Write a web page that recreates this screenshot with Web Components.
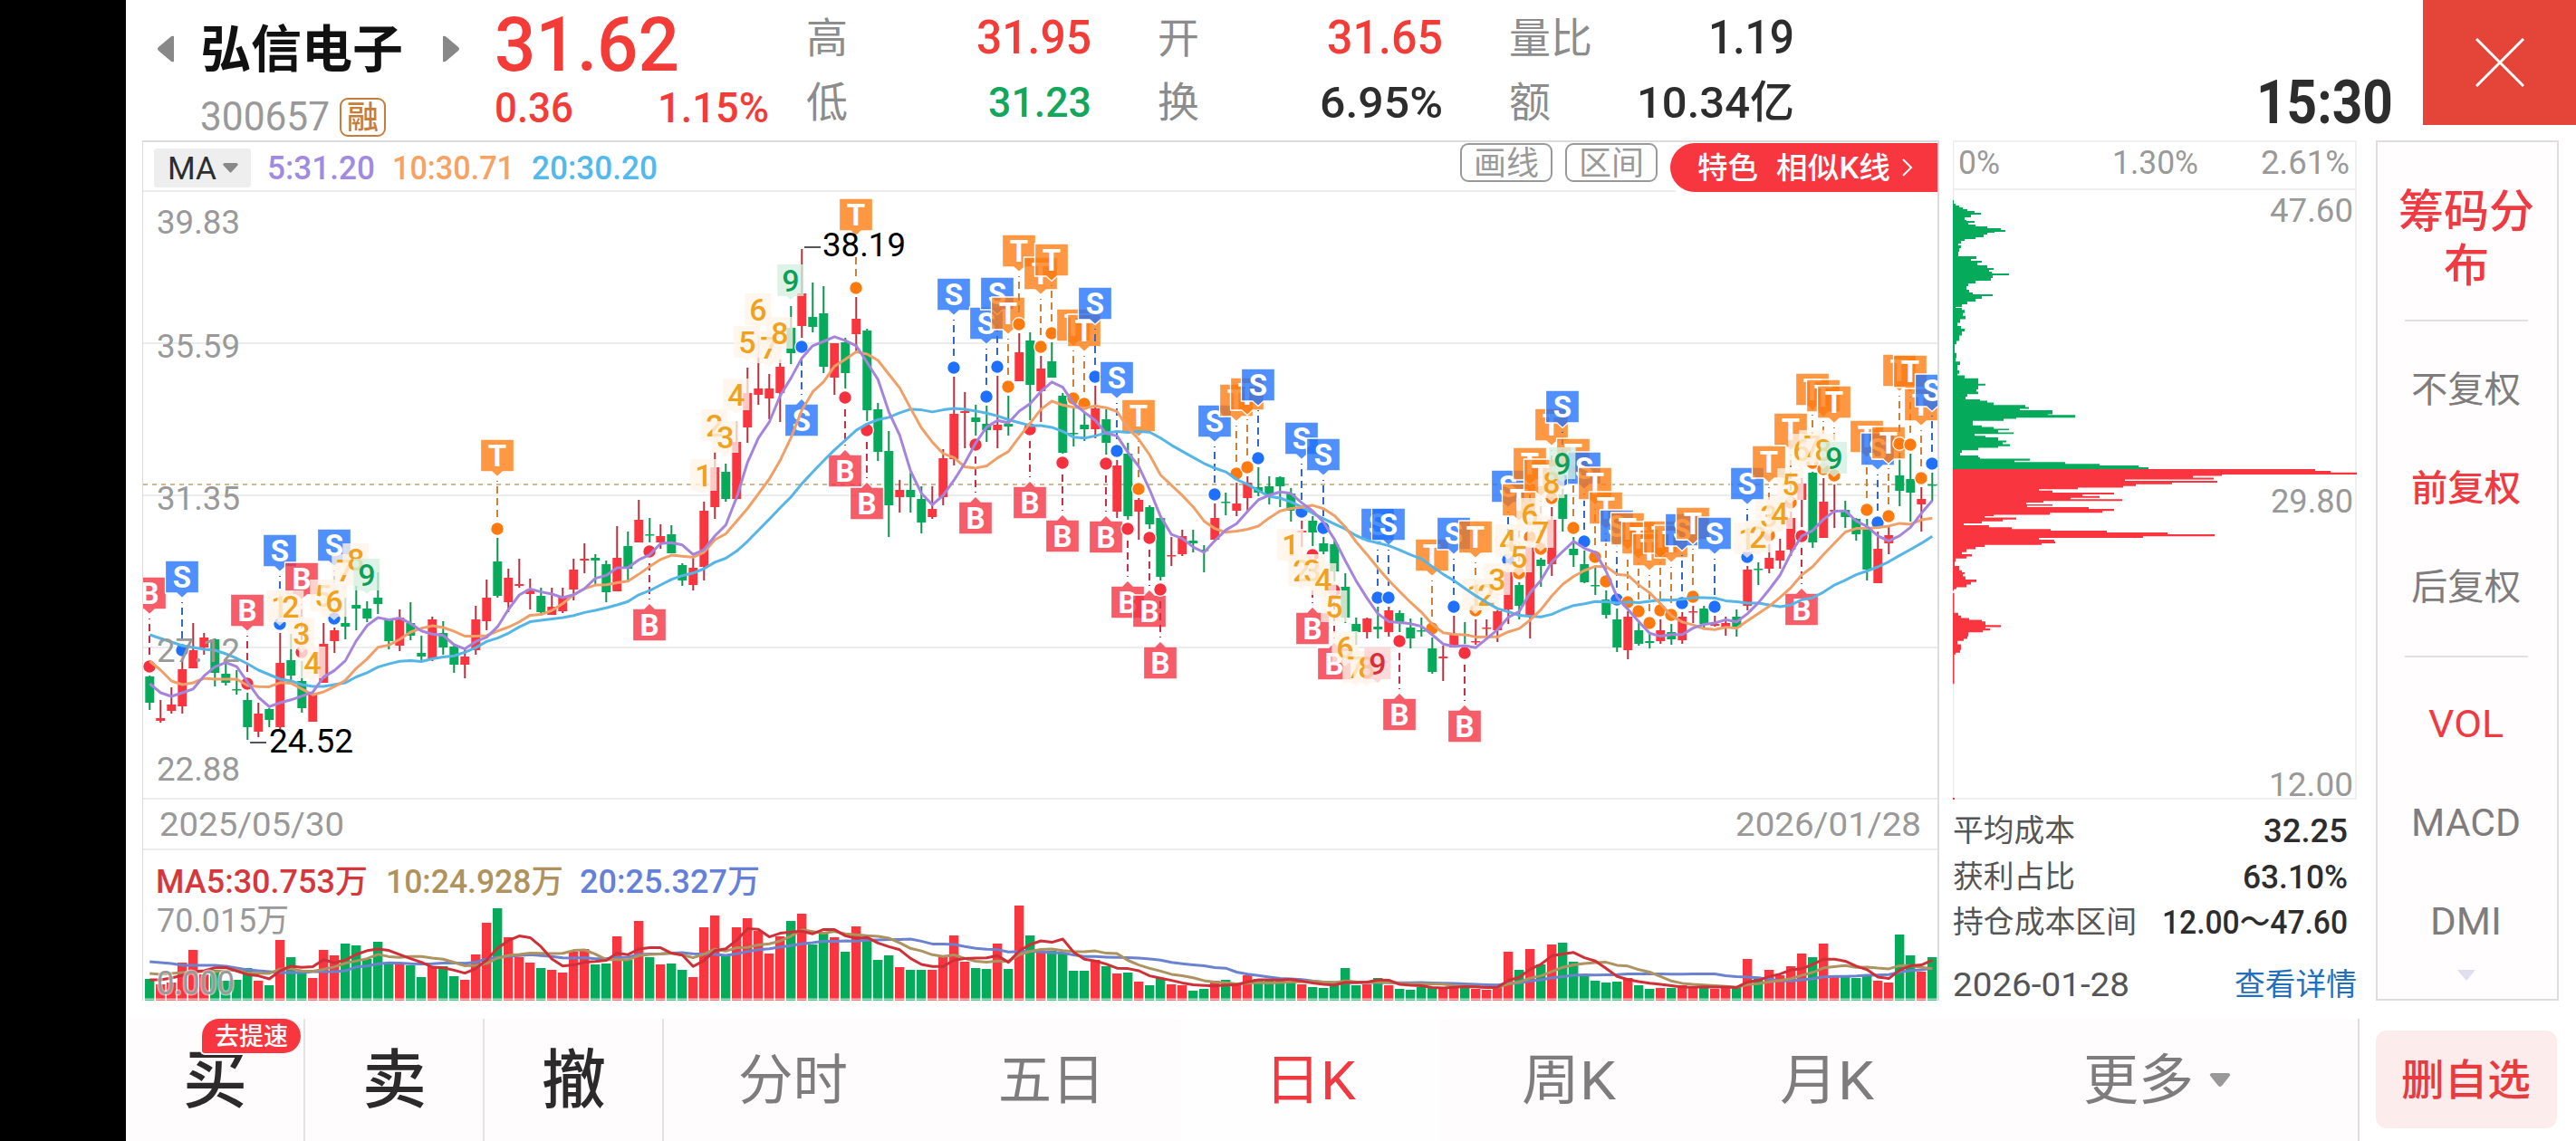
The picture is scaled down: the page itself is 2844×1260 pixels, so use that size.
<!DOCTYPE html>
<html lang="zh-CN">
<head>
<meta charset="utf-8">
<title>弘信电子 300657</title>
<style>
    html, body { margin: 0; padding: 0; }
    body {
        --red: #f8363f;
        --green: #05aa5b;
        --line: #e4e4e4;
        --grey: #8c8c8c;
        width: 2844px;
        height: 1260px;
        overflow: hidden;
        background: #fff;
        font-family: Roboto, "Noto Sans CJK SC", sans-serif;
        color: #2d2d2d;
    }
</style>
</head>
<body>
<stock-page>
    <stock-header slot="header"></stock-header>
    <kline-panel slot="main"></kline-panel>
    <chip-panel slot="main"></chip-panel>
    <side-menu slot="main"></side-menu>
    <bottom-bar slot="footer"></bottom-bar>
</stock-page>

<script>
// Text set to a fixed width, centred on its capitals
class FitText extends HTMLElement {
    constructor() {
        super();
        this.attachShadow({ mode: 'open' });
    }

    connectedCallback() {
        const w = Number(this.getAttribute('w'));
        const size = Number(this.getAttribute('size'));
        this.shadowRoot.innerHTML = `
            <style>
                :host { display: block; flex: none; width: ${w}px; height: ${size}px; }
                svg { display: block; overflow: visible; }
                text { fill: currentColor; white-space: pre; }
            </style>
            <svg width="${w}" height="${size}">
                <text x="0" y="${size * 0.85}" font-size="${size}" textLength="${w}" lengthAdjust="spacingAndGlyphs">${this.textContent}</text>
            </svg>
        `;
    }
}

class StockPage extends HTMLElement {
    constructor() {
        super();
        this.attachShadow({ mode: 'open' });
        this.shadowRoot.innerHTML = `
            <style>
                :host { display: grid; grid-template-columns: 139px 1fr; width: 2844px; height: 1260px; }
                .notch { background: #000; }
                .content { display: flex; flex-direction: column; }
                .main { display: flex; height: 950px; padding-left: 18px; }
                ::slotted(bottom-bar) { margin-top: 20px; }
            </style>
            <div class="notch"></div>
            <div class="content">
                <slot name="header"></slot>
                <div class="main"><slot name="main"></slot></div>
                <slot name="footer"></slot>
            </div>
        `;
    }
}

class StockHeader extends HTMLElement {
    constructor() {
        super();
        this.attachShadow({ mode: 'open' });
        this.shadowRoot.innerHTML = `
            <style>
                :host { display: flex; height: 155px; box-sizing: border-box; padding-left: 34px; }
                .name { width: 376px; padding-top: 20px; }
                .title, .code { display: flex; align-items: center; }
                .title { height: 68px; font-weight: 700; color: #111; }
                .title fit-text { margin: 0 43px 0 28px; }
                .code { height: 82px; padding-left: 48px; color: #999; }
                .tag {
                    display: flex; align-items: center; justify-content: center;
                    width: 47px; height: 39px; margin-left: 11px;
                    border: 2px solid #c87c3a; border-radius: 9px; color: #c87c3a; font-weight: 500;
                }
                .quote { width: 341px; padding-top: 7px; color: #f33b38; font-weight: 500; }
                .big { height: 84px; margin-left: -3px; }
                .change { display: flex; justify-content: space-between; width: 303px; margin-top: 5px; margin-left: -3px; }
                .stats { display: grid; grid-template-columns: repeat(3, 315px); column-gap: 73px; grid-auto-rows: 71px; padding-top: 6px; }
                .stats div { display: flex; align-items: center; justify-content: space-between; color: var(--grey); }
                .stats .up, .stats .down, .stats .num { font-weight: 500; }
                .up { color: #f33b38; }
                .down { color: #12a75d; }
                .num { color: #2d2d2d; }
                .clock { margin: 79px 33px 0 auto; font-weight: 700; }
                .close { display: flex; align-items: center; justify-content: center; width: 169px; height: 138px; background: #e54539; }
            </style>
            <div class="name">
                <div class="title">
                    <svg width="20" height="30"><path d="M19 1V29Q17 30 15 28L2 17Q0 15 2 13L15 2Q17 0 19 1Z" fill="#888"/></svg>
                    <fit-text w="224" size="56">弘信电子</fit-text>
                    <svg width="20" height="30"><path d="M1 1V29Q3 30 5 28L18 17Q20 15 18 13L5 2Q3 0 1 1Z" fill="#888"/></svg>
                </div>
                <div class="code">
                    <fit-text w="143" size="44">300657</fit-text>
                    <span class="tag"><fit-text w="35" size="35">融</fit-text></span>
                </div>
            </div>
            <div class="quote">
                <div class="big"><fit-text w="204" size="84">31.62</fit-text></div>
                <div class="change">
                    <fit-text w="87" size="46">0.36</fit-text>
                    <fit-text w="123" size="46">1.15%</fit-text>
                </div>
            </div>
            <div class="stats">
                <div><fit-text w="46" size="46">高</fit-text><fit-text class="up" w="127" size="51">31.95</fit-text></div>
                <div><fit-text w="46" size="46">开</fit-text><fit-text class="up" w="128" size="51">31.65</fit-text></div>
                <div><fit-text w="92" size="46">量比</fit-text><fit-text class="num" w="95" size="51">1.19</fit-text></div>
                <div><fit-text w="46" size="46">低</fit-text><fit-text class="down" w="114" size="47">31.23</fit-text></div>
                <div><fit-text w="46" size="46">换</fit-text><fit-text class="num" w="136" size="49">6.95%</fit-text></div>
                <div><fit-text w="46" size="46">额</fit-text><fit-text class="num" w="174" size="49">10.34亿</fit-text></div>
            </div>
            <fit-text class="clock" w="151" size="67">15:30</fit-text>
            <div class="close">
                <svg width="54" height="54"><path d="M1 1L53 53M53 1L1 53" stroke="#fff" stroke-width="3"/></svg>
            </div>
        `;
    }
}

// r/g, high, body top, body bottom, low
const CANDLES = `
g 746 747 776 784|r 773 793 796 798|r 759 778 785 788|r 728 739 780 788|r 688 718 738 738|r 699 704 715 723
g 705 706 743 758|g 732 744 754 757|g 740 761 762 767|g 765 773 803 817|r 776 788 808 814|g 782 783 795 803
r 699 732 803 805|g 700 729 746 752|g 730 752 782 787|r 765 767 797 797|r 688 711 754 754|r 693 696 708 721
g 660 688 692 706|g 647 668 672 696|g 664 672 683 687|g 632 660 667 678|g 683 684 708 717|r 673 682 713 719
g 665 688 702 707|g 702 721 725 731|r 681 684 727 730|g 686 699 715 723|g 712 714 734 743|r 717 725 734 749
r 669 684 718 723|r 640 660 686 696|g 594 620 658 660|r 628 638 665 676|r 617 645 647 649|r 639 651 656 673
g 649 658 676 679|r 649 670 679 679|r 649 658 675 677|r 617 629 651 663|r 600 617 619 633|g 612 616 619 645
g 619 623 654 665|r 581 616 653 653|g 587 603 628 643|r 552 574 599 599|g 572 590 591 599|r 579 592 599 606
g 580 590 611 611|g 622 624 641 647|r 615 627 646 652|r 554 564 626 641|r 499 516 560 573|g 512 521 551 554
r 465 488 551 552|r 406 434 472 489|r 370 429 436 447|r 413 429 440 463|r 397 405 434 466|g 338 362 390 402
r 275 324 360 373|g 312 350 361 367|g 316 346 405 412|r 379 379 417 436|g 373 378 412 429|r 328 352 369 388
g 363 365 453 465|g 445 452 499 509|g 476 498 558 593|r 530 541 549 566|g 522 541 549 566|g 537 551 577 589
r 537 562 571 573|r 496 506 549 558|r 416 457 507 514|r 433 454 456 495|g 447 461 466 481|g 448 468 475 488
r 415 469 475 495|g 437 468 471 481|r 368 389 421 421|g 367 376 425 464|r 393 407 432 466|g 378 399 417 417
g 434 437 500 501|g 450 478 479 493|g 456 469 474 487|r 426 451 474 484|g 452 463 489 502|r 508 514 565 572
g 489 501 570 574|r 550 552 565 596|g 558 560 579 584|g 569 572 637 641|r 593 613 614 625|r 585 592 612 614
g 585 597 600 610|g 602 607 608 632|r 556 572 596 596|g 544 554 555 569|r 533 556 564 570|r 526 533 550 565
g 516 538 544 548|g 526 537 546 557|g 526 527 537 560|g 539 545 564 576|r 575 586 588 604|g 570 575 588 603
g 593 600 609 612|g 597 601 631 642|g 633 648 682 688|g 682 689 698 712|r 682 683 698 705|g 670 692 695 705
r 670 674 698 703|g 674 677 687 698|g 683 693 705 716|g 682 696 697 703|g 704 716 742 744|r 713 725 727 752
r 680 700 715 715|g 687 700 701 711|r 684 708 709 712|r 684 693 694 703|r 673 675 696 709|r 628 631 673 689
g 643 646 669 684|r 603 604 681 705|g 616 618 625 648|r 560 574 623 636|g 540 546 573 587|g 593 606 613 626
g 608 623 643 644|g 625 646 647 657|g 652 662 679 683|g 672 684 715 720|r 675 681 718 728|g 685 696 711 713
g 698 708 710 716|r 684 696 708 711|g 689 698 706 712|r 676 681 707 711|r 669 675 676 688|g 669 672 689 693
r 680 689 691 692|r 681 688 693 702|g 673 681 693 703|r 625 629 669 674|g 621 628 629 646|r 601 616 628 633
r 595 608 619 628|r 565 572 607 614|r 528 534 552 582|g 521 522 599 605|r 528 554 594 594|r 535 563 565 583
g 553 563 571 583|g 572 573 590 597|g 573 585 629 641|r 587 606 644 644|r 580 591 600 612|g 500 525 542 559
g 501 529 544 576|r 538 551 557 587|g 522 535 536 553`
    .trim().split(/[|\n]/).map(row => {
        const [color, ...v] = row.trim().split(' ');
        const [high, top, bottom, low] = v.map(Number);
        return { color, high, top, bottom, low, close: color === 'r' ? top : bottom };
    });

// Trade marks over the highs and under the lows, as type + candle index
const MARKS = `B0 S3 B9 S12 B14 S17 T32 B46- S60- B64- T65 B66- S74 B76- S77 S78 T79 T80 B81- T82 T83 B84-
T85 T86 S87 B88- S89 B90- T91 B92- B93- S98 T100 T101 S102 S106 B107- S108 B109- S113 S114 B115- T118
S120 B121- T122 S125 T126 T127 T128 T129 S130 T131 S132 T133 T134 S135 T136 T137 T138 T139 T140 S141
T142 S144 S147 T149 T151 B152- T153 T154 T155 T158 S159 T160 T161 T162 T163 S164`
    .split(/\s+/).map(m => ({ type: m[0], index: parseInt(m.slice(1)), below: m.endsWith('-') }));

// Nine-count series: index of the 1, then the centre of each digit
const COUNTS = [
    [12, [670, 670, 700, 732, 658, 664, 630, 618, 635], 'g'],
    [51, [525, 470, 483, 436, 378, 342, 384, 368, 310], 'g'],
    [105, [602, 630, 630, 640, 670, 715, 737, 737, 733], 'r'],
    [122, [657, 657, 640, 597, 615, 568, 588, 533, 512], 'g'],
    [147, [595, 593, 570, 567, 535, 497, 493, 497, 506], 'g']
];

const VOLUME_TOPS = `1081 1087 1085 1063 1049 1076 1071 1083 1082 1069 1083 1088 1038 1057 1075 1080 1049 1055 1042 1044
1059 1040 1063 1065 1066 1079 1067 1067 1078 1082 1054 1019 1003 1035 1057 1063 1069 1071 1074 1051
1048 1065 1064 1034 1060 1017 1057 1065 1064 1071 1079 1024 1011 1054 1024 1014 1028 1053 1034 1017
1009 1043 1029 1035 1051 1023 1038 1060 1055 1068 1071 1071 1071 1055 1033 1062 1069 1070 1042 1070
1000 1033 1050 1050 1052 1072 1072 1060 1067 1075 1074 1084 1088 1080 1087 1088 1094 1092 1083 1082
1087 1077 1081 1083 1083 1084 1087 1090 1091 1087 1069 1088 1087 1080 1088 1092 1093 1090 1090 1090
1088 1089 1092 1093 1089 1051 1071 1048 1065 1043 1041 1062 1077 1083 1085 1084 1080 1088 1092 1091
1091 1088 1089 1090 1092 1091 1090 1059 1081 1071 1077 1067 1053 1057 1042 1077 1078 1080 1077 1083
1085 1032 1055 1073 1057`.split(/\s+/).map(Number);

const COLORS = {
    B: ['#f5303f', '#c93048'],
    S: ['#1f70ff', '#3468c8'],
    T: ['#ff7a0e', '#d08038']
};

const candleX = i => 165.3 + 12 * i;

// The first points come from days before the visible range
function average(values, n, seed) {
    return values.map((v, i) => {
        if (i < n - 1) return seed[i];
        return values.slice(i - n + 1, i + 1).reduce((a, b) => a + b) / n;
    });
}

function line(values, color, width = 3) {
    const points = values.map((y, i) => `${candleX(i)},${y.toFixed(1)}`).join(' ');
    return `<polyline points="${points}" fill="none" stroke="${color}" stroke-width="${width}" stroke-linejoin="round"/>`;
}

function label(text, x, y, w, color = '#999', size = 36) {
    return `<text x="${x}" y="${y}" font-size="${size}" fill="${color}" textLength="${w}" lengthAdjust="spacingAndGlyphs">${text}</text>`;
}

function candle(c, i) {
    const x = candleX(i);
    const body = c.color === 'r' ? '#f9353f' : '#05aa5b';
    const wick = c.color === 'r' ? '#b5303f' : '#0b9450';
    return `<path d="M${x} ${c.high}V${c.low}" stroke="${wick}" stroke-width="2"/>
        <rect x="${x - 5}" y="${c.top}" width="10" height="${Math.max(c.bottom - c.top, 1.5)}" fill="${body}"/>`;
}

function mark({ type, index, below }) {
    const x = candleX(index) - 0.3;
    const [fill, dash] = COLORS[type];
    const c = CANDLES[index];
    const dot = below ? c.low + 10 : c.high - 10;
    const top = below ? dot + 63 : dot - 99;
    const tip = below
        ? `M${x - 18.5} ${top}H${x - 6}L${x} ${top - 6}L${x + 6} ${top}H${x + 18.5}V${top + 36}H${x - 18.5}Z`
        : `M${x - 18.5} ${top}H${x + 18.5}V${top + 36}H${x + 6}L${x} ${top + 41.5}L${x - 6} ${top + 36}H${x - 18.5}Z`;
    const stem = below ? `M${x} ${dot + 13}V${top - 10}` : `M${x} ${dot - 13}V${top + 46}`;
    return `<path d="${stem}" stroke="${dash}" stroke-width="2" stroke-dasharray="8 5"/>
        <circle cx="${x}" cy="${dot}" r="7.3" fill="${fill}" stroke="#fff" stroke-width="1.2"/>
        <path d="${tip}" fill="${fill}" fill-opacity="0.78" stroke="#fff" stroke-width="1.3" stroke-linejoin="round"/>
        <text x="${x}" y="${top + 30}" font-size="33" font-weight="700" text-anchor="middle" fill="#fff">${type}</text>`;
}

function count([start, ys, last]) {
    return ys.map((y, n) => {
        const x = candleX(start + n) - 0.5;
        let box = '#fff4e9', text = '#f0a21e';
        if (n === 8) {
            box = last === 'g' ? '#d3f0e1' : '#fcd0d2';
            text = last === 'g' ? '#0d9f57' : '#d83038';
        }
        return `<path d="M${x - 14.5} ${y - 18}h29v35h-10l-4.5 4l-4.5 -4h-10z" fill="${box}" fill-opacity="0.78"/>
            <text x="${x}" y="${y + 12}" font-size="34" font-weight="500" text-anchor="middle" fill="${text}">${n + 1}</text>`;
    }).join('');
}

class KlinePanel extends HTMLElement {
    constructor() {
        super();
        this.attachShadow({ mode: 'open' });
        const closes = CANDLES.map(c => c.close);
        const ma5 = average(closes, 5, [755, 765, 769, 765]);
        const ma10 = average(closes, 10, [730, 740, 752, 756, 754, 749, 750, 750, 750]);
        const ma20 = average(closes, 20, [701, 705, 709, 713, 715, 717, 718, 722, 727, 733, 740, 745, 750, 752, 756, 758, 758, 756, 754]);
        const vol5 = average(VOLUME_TOPS, 5, [1082, 1082, 1080, 1077]);
        const vol10 = average(VOLUME_TOPS, 10, [1075, 1076, 1075, 1074, 1073, 1073, 1073, 1072, 1071]);
        const vol20 = average(VOLUME_TOPS, 20, [1062, 1063, 1064, 1066, 1066, 1066, 1066, 1067, 1069, 1071, 1072, 1073, 1074, 1074, 1074, 1073, 1073, 1073, 1072]);
        const bars = VOLUME_TOPS.map((y, i) =>
            `<rect x="${candleX(i) - 5.3}" y="${y}" width="10.4" height="${1105 - y}" fill="${CANDLES[i].color === 'r' ? '#f9353f' : '#05aa5b'}"/>`).join('');

        this.shadowRoot.innerHTML = `
            <style>
                :host {
                    display: flex; flex: none; flex-direction: column; box-sizing: border-box;
                    width: 1984px; height: 950px; margin-right: 15px;
                    border: 1px solid #dcdcdc; border-width: 2px 2px 0 1px;
                }
                .tools { display: flex; box-sizing: border-box; height: 53px; padding: 1px 0 0 12px; }
                .ma { display: flex; align-items: center; justify-content: center; gap: 7px; width: 107px; height: 43px; margin: 6px 18px 0 0; background: #eee; border-radius: 3px; }
                .tools > fit-text { margin: 9px 19px 0 0; }
                .pill {
                    display: flex; align-items: center; justify-content: center; box-sizing: border-box;
                    width: 102px; height: 43px; margin-right: 14px;
                    border: 2px solid #999; border-radius: 9px; color: #999;
                }
                .first { margin-left: auto; }
                .special {
                    display: flex; align-items: center; box-sizing: border-box; width: 295px; height: 54px; padding-left: 30px;
                    background: var(--red); border-radius: 27px 0 0 27px; color: #fff; font-weight: 500; z-index: 1;
                }
                .special fit-text + fit-text { margin: 0 13px 0 20px; }
                svg { display: block; flex: none; }
            </style>
            <div class="tools">
                <div class="ma"><fit-text w="54" size="35">MA</fit-text><svg width="17" height="11"><path d="M2 0H15Q18 1 16 3L9.500 10Q8.500 11 7.500 10L1 3Q-1 1 2 0Z" fill="#888"/></svg></div>
                <fit-text w="119" size="36" style="color:#a18be0;font-weight:500">5:31.20</fit-text>
                <fit-text w="135" size="36" style="color:#f5a263;font-weight:500">10:30.71</fit-text>
                <fit-text w="139" size="36" style="color:#53b8ea;font-weight:500">20:30.20</fit-text>
                <div class="pill first"><fit-text w="72" size="36">画线</fit-text></div>
                <div class="pill"><fit-text w="72" size="36">区间</fit-text></div>
                <div class="special">
                    <fit-text w="67" size="33">特色</fit-text><fit-text w="126" size="33">相似K线</fit-text>
                    <svg width="12" height="20"><path d="M1 1L10 10L1 19" fill="none" stroke="#fff" stroke-width="2"/></svg>
                </div>
            </div>
            <svg width="1981" height="729" viewBox="158 210 1981 729">
                <g stroke="#ececec" stroke-width="2">
                    <path d="M158 211H1850M158 379H2140M158 547H2140M158 715H2140M158 882H2140M158 938H2140"/>
                </g>
                <path d="M158 535H2140" stroke="#bda274" stroke-width="1.5" stroke-dasharray="5 5"/>
                ${CANDLES.map(candle).join('')}
                ${MARKS.map(mark).join('')}
                ${COUNTS.map(count).join('')}
                ${line(ma20, '#55b5e6')}
                ${line(ma10, '#f0a067')}
                ${line(ma5, '#a584dc')}
                ${label('39.83', 173, 258, 92)}
                ${label('35.59', 173, 395, 92)}
                ${label('31.35', 173, 563, 92)}
                ${label('27.12', 173, 731, 92)}
                ${label('22.88', 173, 862, 92)}
                ${label('2025/05/30', 176, 923, 204)}
                ${label('2026/01/28', 1916, 923, 205)}
                <path d="M276 820H294M888 273H906" stroke="#555" stroke-width="2"/>
                ${label('24.52', 297, 831, 93, '#000')}
                ${label('38.19', 908, 283, 92, '#000')}
            </svg>
            <svg width="1981" height="166" viewBox="158 939 1981 166">
                ${bars}
                ${line(vol20, '#6b82d0')}
                ${line(vol10, '#ac935f')}
                ${line(vol5, '#cf3038')}
                <path d="M158 1103.500H2140" stroke="#fff" stroke-opacity="0.6" stroke-width="2"/>
                <g font-weight="500">
                    ${label('MA5:30.753万', 172, 986, 234, '#d5373c')}
                    ${label('10:24.928万', 426, 986, 196, '#b0925c')}
                    ${label('20:25.327万', 640, 986, 199, '#6480d8')}
                </g>
                ${label('70.015万', 173, 1029, 146)}
                <g stroke="#fff" stroke-opacity="0.5" stroke-width="3" paint-order="stroke">${label('0.000', 173, 1098, 86)}</g>
            </svg>
        `;
    }
}

// Chip distribution as y,width pairs: each row runs down to the next one
const CHIPS_TOP = `221,1 225,3 227,7 229,11 231,16 233,24 235,31 237,20 240,13 243,15 244,24 246,17 248,25 250,38 252,53 254,58
256,46 257,38 259,34 262,25 264,13 266,9 269,6 271,9 274,7 278,6 283,26 286,20 288,32 290,27 293,38 296,45 298,40 300,43
302,62 304,44 307,42 310,25 313,17 316,15 320,18 323,22 325,44 327,32 330,25 333,16 336,10 339,3`;
const CHIPS = `0,10 6,13 15,11 23,14 33,8 43,5 52,9 60,13 68,10 80,7 95,4 105,2 130,4 145,3 155,8 165,5 180,7 190,5 195,13
203,28 215,28 219,36 224,28 235,26 242,28 249,16 256,14 264,30 268,38 273,45 280,80 286,84 291,74 295,110 303,110 307,105
309,135 317,70 320,56 326,22 334,22 339,32 344,45 349,62 353,50 359,67 364,24 369,36 374,50 383,59 388,55 393,63 399,50
404,28 411,10 418,8 426,28 431,30 435,85 441,68 445,124 450,162 455,205 460,216 465,400 470,417 475,446 481,297 485,265
490,288 495,190 499,292 504,242 509,202 514,188 519,138 523,95 527,110 533,178 538,143 543,162 548,130 552,187 557,100
562,81 567,110 571,82 575,150 580,178 586,165 591,107 597,45 601,35 605,70 611,55 616,32 622,12 627,40 633,65 638,108
643,170 648,237 653,289 659,210 664,95 669,112 674,113 679,98 684,35 690,25 696,15 705,10 711,21 717,15 723,3 733,2
745,7 757,10 763,13 768,11 775,14 784,26 791,20 798,15 806,4 811,1 816,0 823,1.5 880,6 888,9 895,18 900,32 905,36
915,53 921,36 925,41 931,33 936,17 948,16 955,12 961,5 971,9 987,8 995,3 1000,1.5 1085,0`;

function chipRows() {
    const parse = s => s.split(/\s+/).map(p => p.split(',').map(Number));
    const rows = parse(CHIPS_TOP).concat(parse(CHIPS).map(([y, w]) => [340 + y / 2.613, w]));
    let green = '', red = '';
    rows.slice(0, -1).forEach(([y, w], i) => {
        const d = `M0 ${y.toFixed(1)}H${w}V${rows[i + 1][0].toFixed(1)}H0Z`;
        if (y < 517.8) green += d; else red += d;
    });
    return `<path d="${green}" fill="#05aa5b"/><path d="${red}" fill="#f9353f"/>`;
}

class ChipPanel extends HTMLElement {
    constructor() {
        super();
        this.attachShadow({ mode: 'open' });
        this.shadowRoot.innerHTML = `
            <style>
                :host { display: flex; flex: none; flex-direction: column; width: 446px; height: 950px; margin-right: 21px; color: #2d2d2d; }
                svg { display: block; flex: none; }
                .row { display: flex; justify-content: space-between; align-items: center; height: 50.500px; padding-right: 10px; }
                .row > :first-child { color: #555; }
                .row > :last-child { font-weight: 500; }
                .rows { padding-top: 9px; }
                .date { height: 86px; padding-right: 0; }
                .date > :last-child { color: #2270bd; font-weight: 400; }
            </style>
            <svg width="446" height="728" viewBox="0 155 446 728">
                <path d="M0.500 156H445V882H0.500ZM0 209H445" fill="none" stroke="#e9eaec" stroke-width="1.500"/>
                ${chipRows()}
                <rect x="0" y="881" width="2" height="2" fill="#f9353f"/>
                ${label('0%', 6, 192, 46)}
                ${label('1.30%', 176, 192, 95)}
                ${label('2.61%', 340, 192, 98)}
                ${label('47.60', 350, 245, 92)}
                ${label('29.80', 351, 566, 91)}
                ${label('12.00', 349, 879, 93)}
            </svg>
            <div class="rows">
                <div class="row"><fit-text w="135" size="34">平均成本</fit-text><fit-text w="93" size="36">32.25</fit-text></div>
                <div class="row"><fit-text w="135" size="34">获利占比</fit-text><fit-text w="116" size="36">63.10%</fit-text></div>
                <div class="row"><fit-text w="203" size="34">持仓成本区间</fit-text><fit-text w="205" size="36">12.00～47.60</fit-text></div>
                <div class="row date"><fit-text w="195" size="36">2026-01-28</fit-text><fit-text w="135" size="34">查看详情</fit-text></div>
            </div>
        `;
    }
}

class SideMenu extends HTMLElement {
    constructor() {
        super();
        this.attachShadow({ mode: 'open' });
        this.shadowRoot.innerHTML = `
            <style>
                :host {
                    display: flex; flex: none; flex-direction: column; align-items: center; box-sizing: border-box;
                    width: 202px; height: 950px; padding-right: 3px; background: #fffdfd; border: 2px solid #dedcde; color: #7f7c7e;
                }
                .head { display: grid; justify-items: center; row-gap: 10px; margin-top: 51px; color: #ef3a42; font-weight: 500; }
                hr { flex: none; width: 136px; height: 2px; margin: 0; border: 0; background: #e2e0e2; }
                .head + hr { margin-top: 35px; }
                .group { display: flex; flex: none; flex-direction: column; align-items: center; }
                .group div { display: flex; align-items: center; height: 109px; }
                .group .on { color: #ef3a42; font-weight: 500; }
                .adjust { margin-top: 20px; height: 349px; }
                .index { margin-top: 18px; }
            </style>
            <div class="head"><fit-text w="150" size="50">筹码分</fit-text><fit-text w="50" size="50">布</fit-text></div>
            <hr>
            <div class="group adjust">
                <div><fit-text w="121" size="40">不复权</fit-text></div>
                <div class="on"><fit-text w="121" size="40">前复权</fit-text></div>
                <div><fit-text w="121" size="40">后复权</fit-text></div>
            </div>
            <hr>
            <div class="group index">
                <div class="on" style="font-weight:400"><fit-text w="83" size="42">VOL</fit-text></div>
                <div><fit-text w="121" size="42">MACD</fit-text></div>
                <div><fit-text w="79" size="42">DMI</fit-text></div>
            </div>
            <svg width="22" height="12"><path d="M1 0H21L11 12Z" fill="#dfdff0"/></svg>
        `;
    }
}

class BottomBar extends HTMLElement {
    constructor() {
        super();
        this.attachShadow({ mode: 'open' });
        this.shadowRoot.innerHTML = `
            <style>
                :host { display: flex; height: 135px; }
                .trade, .tab, .more { display: flex; flex: none; align-items: center; justify-content: center; box-sizing: border-box; background: #fffcfd; }
                .trade { position: relative; width: 198px; border-right: 2px solid #e6e2e4; font-weight: 500; color: #2d2a2b; }
                .badge {
                    position: absolute; left: 84px; top: 0; display: flex; align-items: center; justify-content: center;
                    width: 109px; height: 38px; background: var(--red); color: #fff; box-shadow: 0 0 0 2px #fffcfd;
                    border-radius: 19px 19px 19px 3px; clip-path: inset(0 -3px -3px -3px);
                }
                .tab { width: 285.300px; color: #7f7c7e; }
                .on { color: #ef3a42; background: #fffeff; }
                .more { gap: 17px; width: 445.500px; border-right: 2px solid #dedcde; color: #7f7c7e; }
                .remove {
                    display: flex; flex: none; align-items: center; justify-content: center;
                    width: 200px; height: 108px; margin: 13px 0 0 18px;
                    background: #fdecec; border-radius: 12px; color: #e83b40; font-weight: 500;
                }
            </style>
            <div class="trade"><fit-text w="71" size="71">买</fit-text><span class="badge"><fit-text w="81" size="27">去提速</fit-text></span></div>
            <div class="trade"><fit-text w="71" size="71">卖</fit-text></div>
            <div class="trade"><fit-text w="71" size="71">撤</fit-text></div>
            <div class="tab"><fit-text w="121" size="60">分时</fit-text></div>
            <div class="tab"><fit-text w="118" size="60">五日</fit-text></div>
            <div class="tab on"><fit-text w="101" size="60">日K</fit-text></div>
            <div class="tab"><fit-text w="104" size="60">周K</fit-text></div>
            <div class="tab"><fit-text w="104" size="60">月K</fit-text></div>
            <div class="more"><fit-text w="122" size="60">更多</fit-text><svg width="24" height="16"><path d="M3 0H21Q25 1 22 4L14 14Q12 16 10 14L2 4Q-1 1 3 0Z" fill="#999"/></svg></div>
            <div class="remove"><fit-text w="143" size="47">删自选</fit-text></div>
        `;
    }
}

customElements.define('fit-text', FitText);
customElements.define('stock-page', StockPage);
customElements.define('stock-header', StockHeader);
customElements.define('kline-panel', KlinePanel);
customElements.define('chip-panel', ChipPanel);
customElements.define('side-menu', SideMenu);
customElements.define('bottom-bar', BottomBar);
</script>
</body>
</html>
